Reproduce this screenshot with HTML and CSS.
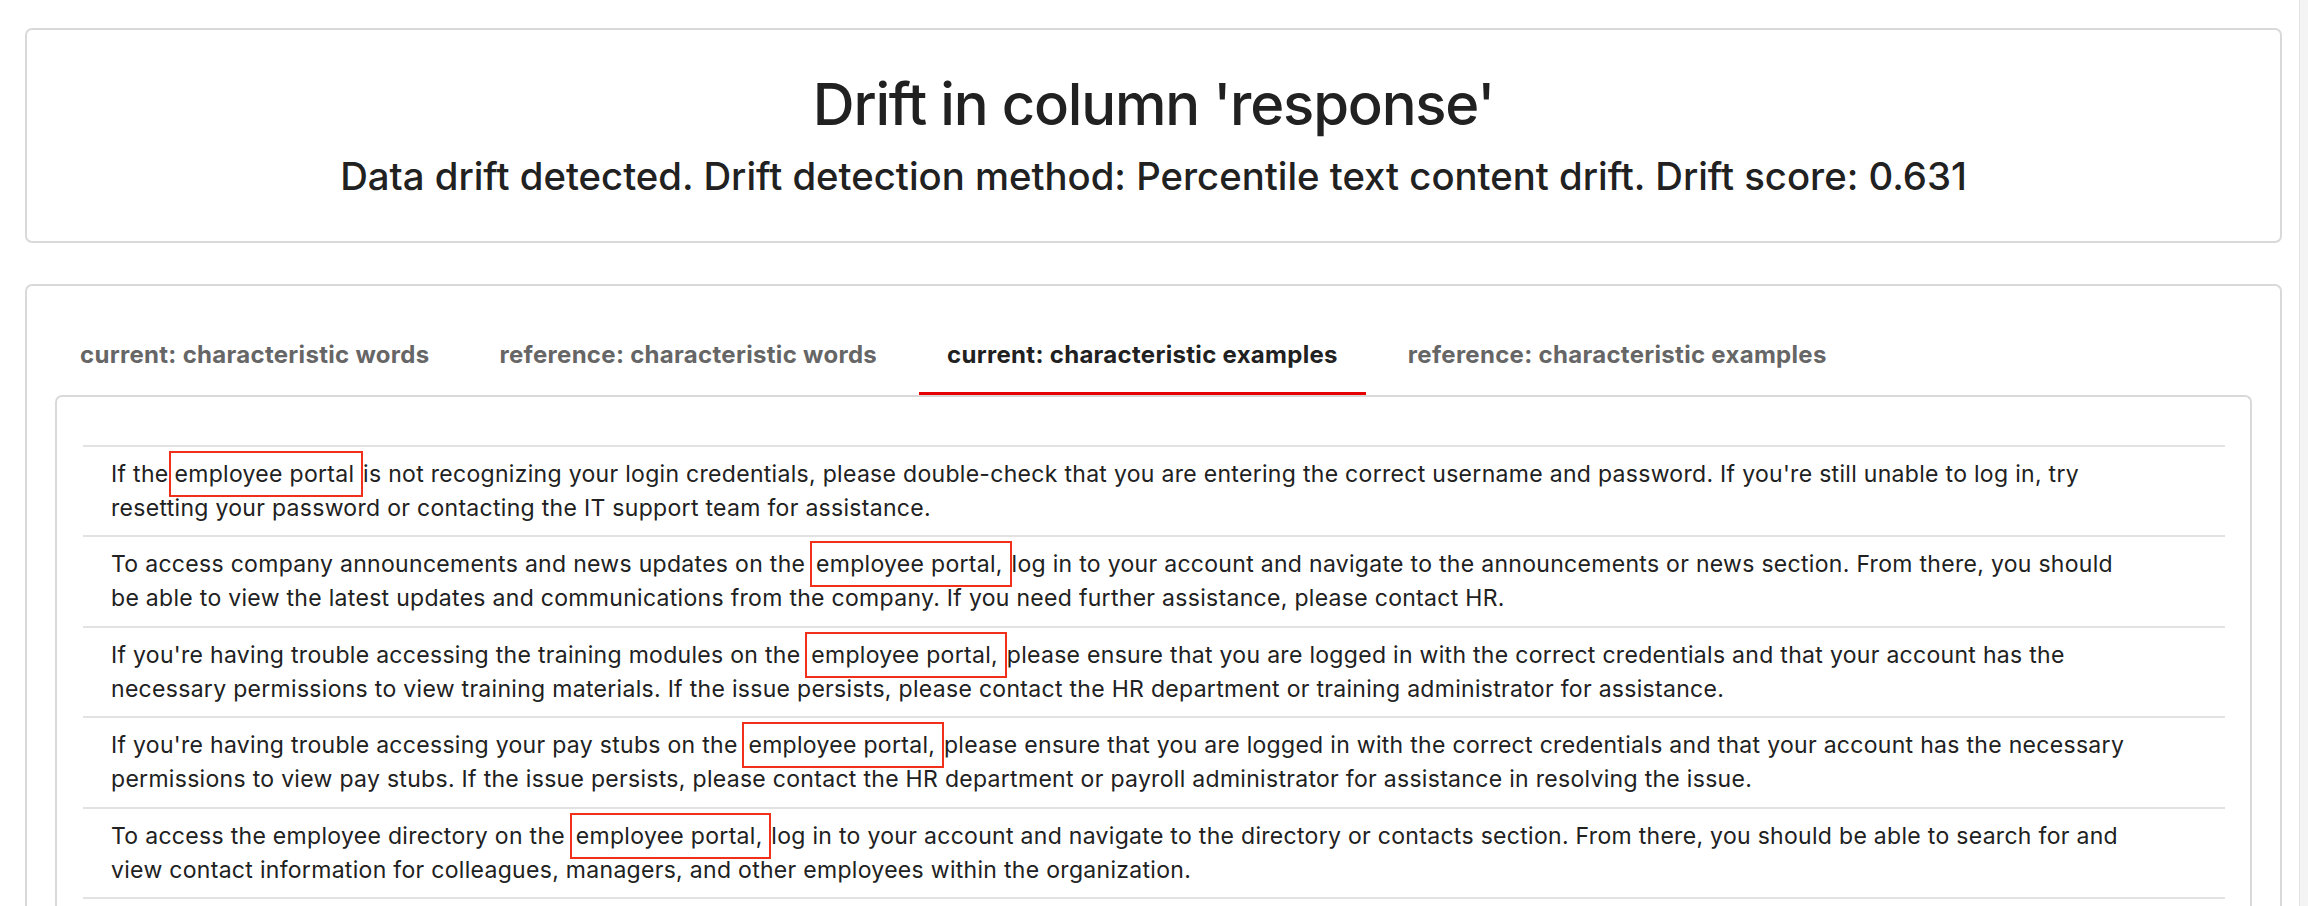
FILE: index.html
```html
<!DOCTYPE html>
<html lang="en">
<head>
<meta charset="utf-8">
<title>Drift in column 'response'</title>
<link rel="stylesheet" href="styles.css">
</head>
<body>
<div class="page">
  <main class="content">
    <section class="card header-card">
      <h1 class="title">Drift in column 'response'</h1>
      <h2 class="subtitle">Data drift detected. Drift detection method: Percentile text content drift. Drift score: 0.631</h2>
    </section>
    <section class="card tabs-card">
      <nav class="tabs">
        <div class="tab">current: characteristic words</div>
        <div class="tab">reference: characteristic words</div>
        <div class="tab active">current: characteristic examples</div>
        <div class="tab">reference: characteristic examples</div>
      </nav>
      <div class="tab-panel">
        <div class="rows">
          <div class="row">If the<span class="mark first">employee portal </span>is not recognizing your login credentials, please double-check that you are entering the correct username and password. If you're still unable to log in, try<br>resetting your password or contacting the IT support team for assistance.</div>
          <div class="row">To access company announcements and news updates on the <span class="mark">employee portal, </span>log in to your account and navigate to the announcements or news section. From there, you should<br>be able to view the latest updates and communications from the company. If you need further assistance, please contact HR.</div>
          <div class="row">If you're having trouble accessing the training modules on the <span class="mark">employee portal, </span>please ensure that you are logged in with the correct credentials and that your account has the<br>necessary permissions to view training materials. If the issue persists, please contact the HR department or training administrator for assistance.</div>
          <div class="row">If you're having trouble accessing your pay stubs on the <span class="mark">employee portal, </span>please ensure that you are logged in with the correct credentials and that your account has the necessary<br>permissions to view pay stubs. If the issue persists, please contact the HR department or payroll administrator for assistance in resolving the issue.</div>
          <div class="row">To access the employee directory on the <span class="mark">employee portal, </span>log in to your account and navigate to the directory or contacts section. From there, you should be able to search for and<br>view contact information for colleagues, managers, and other employees within the organization.</div>
        </div>
      </div>
    </section>
  </main>
  <div class="scroll-track"></div>
</div>
</body>
</html>
```

FILE: styles.css
```css
* { box-sizing: border-box; }

html, body {
  margin: 0;
  padding: 0;
  background: #ffffff;
  height: 100%;
  overflow: hidden;
}

body {
  font-family: Inter, "Liberation Sans", sans-serif;
  color: #212121;
}

.page {
  display: flex;
  height: 100vh;
  overflow: hidden;
}

.content {
  flex: 1;
  min-width: 0;
  padding: 28px 17px 0 25px;
  display: flex;
  flex-direction: column;
  gap: 41px;
}

.scroll-track {
  width: 9px;
  flex: none;
  background: #f4f4f4;
  border-left: 1px solid #e3e3e3;
}

.card {
  border: 2px solid #d9d9d9;
  border-radius: 7px;
  background: #fff;
}

.header-card {
  flex: none;
  height: 215px;
  padding-top: 39px;
  display: flex;
  flex-direction: column;
  align-items: center;
}

.title {
  margin: 0;
  font-size: 58px;
  line-height: 70px;
  font-weight: 500;
  letter-spacing: -1.2px;
  color: #212121;
}

.subtitle {
  margin: 14px 0 0;
  font-size: 38.3px;
  line-height: 46px;
  font-weight: 500;
  letter-spacing: 0;
  color: #212121;
}

.tabs-card {
  flex: 1 0 auto;
  padding: 32px 28px 0;
  border-bottom: none;
  border-bottom-left-radius: 0;
  border-bottom-right-radius: 0;
}

.tabs {
  display: flex;
  gap: 14px;
  margin-left: -3px;
}

.tab {
  padding: 22px 28px 22px;
  font-size: 24px;
  line-height: 30px;
  font-weight: 700;
  color: #666666;
  border-bottom: 3px solid transparent;
  white-space: nowrap;
  letter-spacing: 0.3px;
}

.tab.active {
  color: #212121;
  border-bottom-color: #e60000;
}

.tab-panel {
  border: 2px solid #d9d9d9;
  border-bottom: none;
  border-radius: 7px 7px 0 0;
  padding: 48px 25px 0 26px;
  height: 600px;
}

.row {
  border-top: 2px solid #e2e2e2;
  padding: 10px 28px 10.4px;
  font-size: 23px;
  line-height: 34px;
  white-space: nowrap;
  color: #212121;
  letter-spacing: 0.3px;
}

.row:last-child {
  border-bottom: 2px solid #e2e2e2;
}

.mark {
  border: 2px solid #f1301b;
  padding: 7px 0 7px 4px;
  margin-left: -2px;
}

.mark.first {
  margin-left: 0;
}
```
